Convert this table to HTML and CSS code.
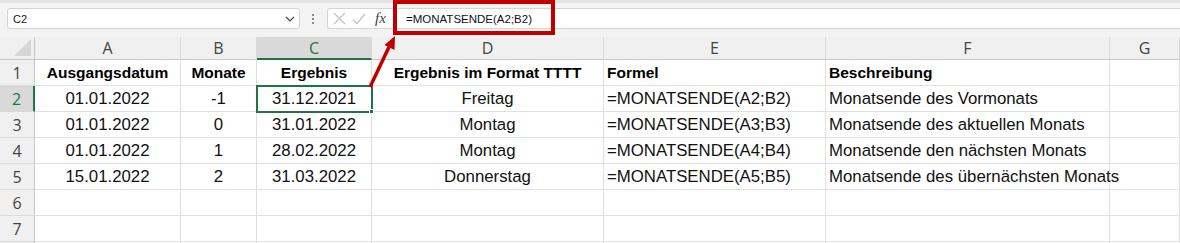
FILE: index.html
```html
<!DOCTYPE html>
<html lang="de">
<head>
    <meta charset="UTF-8">
    <meta name="viewport" content="width=device-width, initial-scale=1.0">
    <title>MONATSENDE</title>
    <link rel="stylesheet" href="styles.css">
</head>
<body>
    <div id="app">
        <!-- Namenfeld und Bearbeitungsleiste -->
        <div class="toolbar">
            <div class="name-box">
                <span>C2</span>
                <svg class="chevron" width="10" height="6" viewBox="0 0 10 6"><path d="M1 1l4 4 4-4" fill="none" stroke="#444" stroke-width="1.2"/></svg>
            </div>
            <div class="grip"><i></i><i></i><i></i></div>
            <div class="formula-bar">
                <div class="fx-buttons">
                    <svg width="13" height="13" viewBox="0 0 13 13"><path d="M1 1l11 11M12 1L1 12" stroke="#c4c4c4" stroke-width="1.2"/></svg>
                    <svg width="14" height="12" viewBox="0 0 14 12"><path d="M1 6.5l4 4L13 1" fill="none" stroke="#c4c4c4" stroke-width="1.2"/></svg>
                    <span class="fx">fx</span>
                </div>
                <div class="formula-input">=MONATSENDE(A2;B2)</div>
            </div>
        </div>

        <!-- Tabellenblatt -->
        <div class="sheet">
            <div class="corner"><span class="tri"></span></div>
            <div class="col-head">A</div>
            <div class="col-head">B</div>
            <div class="col-head active">C</div>
            <div class="col-head">D</div>
            <div class="col-head">E</div>
            <div class="col-head">F</div>
            <div class="col-head">G</div>

            <div class="row-head">1</div>
            <div class="cell bold">Ausgangsdatum</div>
            <div class="cell bold">Monate</div>
            <div class="cell bold">Ergebnis</div>
            <div class="cell bold">Ergebnis im Format TTTT</div>
            <div class="cell bold left">Formel</div>
            <div class="cell bold left">Beschreibung</div>
            <div class="cell"></div>

            <div class="row-head active">2</div>
            <div class="cell">01.01.2022</div>
            <div class="cell">-1</div>
            <div class="cell selected">31.12.2021<span class="fill-handle"></span></div>
            <div class="cell">Freitag</div>
            <div class="cell left">=MONATSENDE(A2;B2)</div>
            <div class="cell left">Monatsende des Vormonats</div>
            <div class="cell"></div>

            <div class="row-head">3</div>
            <div class="cell">01.01.2022</div>
            <div class="cell">0</div>
            <div class="cell">31.01.2022</div>
            <div class="cell">Montag</div>
            <div class="cell left">=MONATSENDE(A3;B3)</div>
            <div class="cell left">Monatsende des aktuellen Monats</div>
            <div class="cell"></div>

            <div class="row-head">4</div>
            <div class="cell">01.01.2022</div>
            <div class="cell">1</div>
            <div class="cell">28.02.2022</div>
            <div class="cell">Montag</div>
            <div class="cell left">=MONATSENDE(A4;B4)</div>
            <div class="cell left">Monatsende den nächsten Monats</div>
            <div class="cell"></div>

            <div class="row-head">5</div>
            <div class="cell">15.01.2022</div>
            <div class="cell">2</div>
            <div class="cell">31.03.2022</div>
            <div class="cell">Donnerstag</div>
            <div class="cell left">=MONATSENDE(A5;B5)</div>
            <div class="cell left">Monatsende des übernächsten Monats</div>
            <div class="cell"></div>

            <div class="row-head">6</div>
            <div class="cell"></div><div class="cell"></div><div class="cell"></div><div class="cell"></div><div class="cell"></div><div class="cell"></div><div class="cell"></div>

            <div class="row-head">7</div>
            <div class="cell"></div><div class="cell"></div><div class="cell"></div><div class="cell"></div><div class="cell"></div><div class="cell"></div><div class="cell"></div>

            <div class="row-head"></div>
            <div class="cell"></div><div class="cell"></div><div class="cell"></div><div class="cell"></div><div class="cell"></div><div class="cell"></div><div class="cell"></div>
        </div>

        <!-- Markierung: Rahmen um die Formel und Pfeil zur Zelle -->
        <svg class="callout" width="1180" height="243" viewBox="0 0 1180 243">
            <rect x="395" y="2" width="158" height="31" fill="none" stroke="#c00000" stroke-width="4"/>
            <line x1="370" y1="87" x2="389" y2="47" stroke="#c00000" stroke-width="3.5"/>
            <polygon points="395,36 394.5,50 384.5,45" fill="#c00000"/>
        </svg>
    </div>
</body>
</html>
```

FILE: styles.css
```css
* {
    box-sizing: border-box;
    margin: 0;
    padding: 0;
}
body, html {
    width: 1180px;
    height: 243px;
    overflow: hidden;
    background: #ffffff;
    font-family: "Liberation Sans", Arial, sans-serif;
}
#app {
    position: relative;
    width: 1180px;
    height: 243px;
    overflow: hidden;
}

/* Bearbeitungsleiste */
.toolbar {
    height: 37px;
    display: flex;
    align-items: flex-start;
    padding: 5px 0 0 7px;
    background-color: #f3f3f3;
    border-top: 3px solid #e3e3e3;
}
.name-box {
    width: 293px;
    height: 21px;
    display: flex;
    align-items: center;
    justify-content: space-between;
    padding: 0 4px 0 5px;
    background-color: #ffffff;
    border: 1px solid #d4d4d4;
    border-radius: 3px;
    font-size: 11px;
    color: #222;
}
.grip {
    width: 27px;
    height: 21px;
    display: flex;
    flex-direction: column;
    align-items: center;
    justify-content: center;
    gap: 2px;
    padding-right: 2px;
}
.grip i {
    width: 2px;
    height: 2px;
    background-color: #8a8a8a;
}
.formula-bar {
    flex: 1;
    height: 21px;
    display: flex;
    align-items: center;
    background-color: #ffffff;
    border: 1px solid #d4d4d4;
    border-right: none;
    border-radius: 3px 0 0 3px;
}
.fx-buttons {
    display: flex;
    align-items: center;
    gap: 6px;
    padding-left: 5px;
    width: 68px;
}
.fx {
    font-family: "Liberation Serif", serif;
    font-style: italic;
    font-size: 15px;
    color: #444;
    margin-left: 3px;
}
.formula-input {
    padding-left: 10px;
    font-size: 11.5px;
    color: #111;
}

/* Tabellenblatt */
.sheet {
    display: grid;
    grid-template-columns: 35px 146px 76px 115px 232px 222px 284px 1fr;
    grid-template-rows: 23px;
    grid-auto-rows: 26px;
}
.corner, .col-head, .row-head {
    background-color: #f0f0f0;
    font-family: "Open Sans", sans-serif;
    font-size: 16px;
    color: #444;
    display: flex;
    align-items: center;
    justify-content: center;
}
.corner {
    position: relative;
    border-right: 1px solid #c6c6c6;
    border-bottom: 1px solid #c6c6c6;
}
.corner .tri {
    position: absolute;
    right: 3px;
    bottom: 3px;
    width: 0;
    height: 0;
    border-left: 17px solid transparent;
    border-bottom: 17px solid #d6d6d6;
}
.col-head {
    border-right: 1px solid #dadada;
    border-bottom: 1px solid #c6c6c6;
}
.col-head.active {
    background-color: #d9d9d9;
    color: #217346;
    border-bottom: 2px solid #217346;
}
.row-head {
    border-right: 1px solid #c6c6c6;
    border-bottom: 1px solid #dadada;
}
.row-head.active {
    background-color: #d9d9d9;
    color: #217346;
    border-right: 2px solid #217346;
}
.cell {
    display: flex;
    align-items: center;
    justify-content: center;
    border-right: 1px solid #e1e1e1;
    border-bottom: 1px solid #e1e1e1;
    font-size: 16.8px;
    color: #111;
    white-space: nowrap;
}
.cell.left {
    justify-content: flex-start;
    padding-left: 3px;
}
.cell.bold {
    font-weight: bold;
    font-size: 15.5px;
    color: #000;
}
.cell.selected {
    position: relative;
    outline: 2px solid #217346;
    outline-offset: -1px;
}
.fill-handle {
    position: absolute;
    right: -3px;
    bottom: -3px;
    width: 5px;
    height: 5px;
    background-color: #217346;
    border: 1px solid #ffffff;
}

.callout {
    position: absolute;
    top: 0;
    left: 0;
    pointer-events: none;
}
```
